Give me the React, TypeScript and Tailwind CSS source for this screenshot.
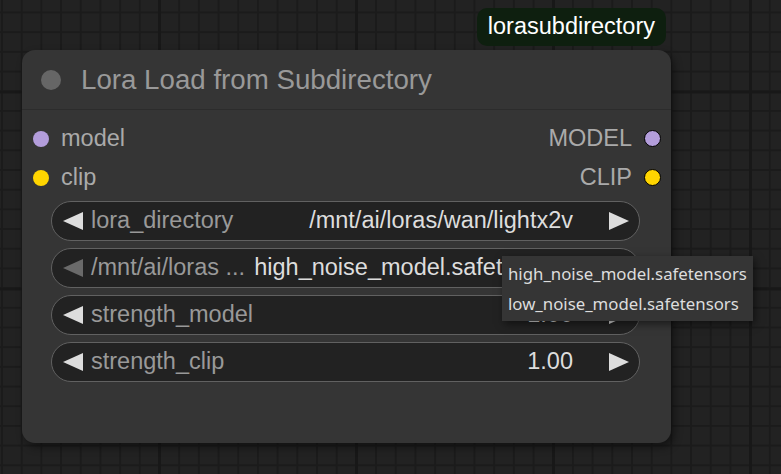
import React from "react";

type Widget = {
  label: string;
  value: string;
  dimLeft?: boolean;
};

const widgets: Widget[] = [
  { label: "lora_directory", value: "/mnt/ai/loras/wan/lightx2v" },
  { label: "/mnt/ai/loras ...", value: "high_noise_model.safetensors", dimLeft: true },
  { label: "strength_model", value: "1.00" },
  { label: "strength_clip", value: "1.00" },
];

const LeftArrow = ({ dim }: { dim?: boolean }) => (
  <svg width="20" height="18" viewBox="0 0 20 18" className="shrink-0">
    <polygon points="0,9 20,0 20,18" fill={dim ? "#6a6a6a" : "#dddddd"} />
  </svg>
);

const RightArrow = () => (
  <svg width="20" height="18" viewBox="0 0 20 18" className="shrink-0">
    <polygon points="20,9 0,0 0,18" fill="#dddddd" />
  </svg>
);

const WidgetRow = ({ w }: { w: Widget }) => (
  <div className="h-[40px] rounded-full border-[1.5px] border-[#616161] bg-[#222222] flex items-center pl-[11px] pr-[10px]">
    <LeftArrow dim={w.dimLeft} />
    <span className="ml-[8px] text-[#999999] whitespace-nowrap">{w.label}</span>
    <span className="flex-1 text-right text-[#dddddd] whitespace-nowrap mr-[36px]">
      {w.value}
    </span>
    <RightArrow />
  </div>
);

export default function App() {
  return (
    <div
      className="relative w-[781px] h-[474px] overflow-hidden bg-[#222222] bg-[linear-gradient(to_right,#181818_3px,transparent_3px),linear-gradient(to_bottom,#181818_3px,transparent_3px),linear-gradient(to_right,#1b1b1b_2px,transparent_2px),linear-gradient(to_bottom,#1b1b1b_2px,transparent_2px)] bg-[size:197px_197px,197px_197px,19.7px_19.7px,19.7px_19.7px] bg-[position:158px_90.5px,158px_90.5px,1px_11.5px,1px_11.5px]"
      style={{ fontFamily: '"Liberation Sans", Arial, sans-serif' }}
    >
      <div className="ml-[22px] pt-[8px] w-[649px]">
        {/* badge */}
        <div className="flex justify-end pr-[5px] mb-[4px]">
          <div className="h-[38px] px-[11px] rounded-[10px] bg-[#0e1f0f] text-white text-[23.5px] flex items-center">
            lorasubdirectory
          </div>
        </div>

        {/* node */}
        <div className="h-[393px] rounded-[13px] bg-[#353535] shadow-[3px_4px_8px_rgba(0,0,0,0.45)] flex flex-col">
          <div className="h-[60px] flex items-center border-b border-[#2c2c2c] pl-[19px] pt-[1px]">
            <div className="w-[20px] h-[20px] rounded-full bg-[#666666]" />
            <span className="ml-[20px] text-[27.7px] text-[#999999] leading-none">
              Lora Load from Subdirectory
            </span>
          </div>

          <div className="pt-[9px] text-[23.5px]">
            <div className="h-[39px] flex items-center justify-between pl-[11px] pr-[10px]">
              <div className="flex items-center">
                <div className="w-[16px] h-[16px] rounded-full bg-[#b39ddb]" />
                <span className="ml-[12px] text-[#aaaaaa]">model</span>
              </div>
              <div className="flex items-center">
                <span className="mr-[12px] text-[#aaaaaa]">MODEL</span>
                <div className="w-[17px] h-[17px] rounded-full bg-[#b39ddb] border-[1.5px] border-black" />
              </div>
            </div>
            <div className="h-[39px] flex items-center justify-between pl-[11px] pr-[10px]">
              <div className="flex items-center">
                <div className="w-[16px] h-[16px] rounded-full bg-[#ffd500]" />
                <span className="ml-[12px] text-[#aaaaaa]">clip</span>
              </div>
              <div className="flex items-center">
                <span className="mr-[12px] text-[#aaaaaa]">CLIP</span>
                <div className="w-[17px] h-[17px] rounded-full bg-[#ffd500] border-[1.5px] border-black" />
              </div>
            </div>

            <div className="mt-[4px] pl-[29px] pr-[31px] flex flex-col gap-[7px]">
              {widgets.map((w) => (
                <WidgetRow key={w.label} w={w} />
              ))}
            </div>
          </div>
        </div>
      </div>

      {/* combo dropdown */}
      <div
        className="absolute left-[502px] top-[256px] w-[251px] h-[65px] bg-[#353535] shadow-[2px_3px_8px_rgba(0,0,0,0.5)] pt-[3px] text-[#dddddd] text-[16.8px]"
        style={{ fontFamily: '"Noto Sans", "Open Sans", sans-serif' }}
      >
        <div className="h-[30px] flex items-center pl-[6px] whitespace-nowrap">
          high_noise_model.safetensors
        </div>
        <div className="h-[30px] flex items-center pl-[6px] whitespace-nowrap">
          low_noise_model.safetensors
        </div>
      </div>
    </div>
  );
}
